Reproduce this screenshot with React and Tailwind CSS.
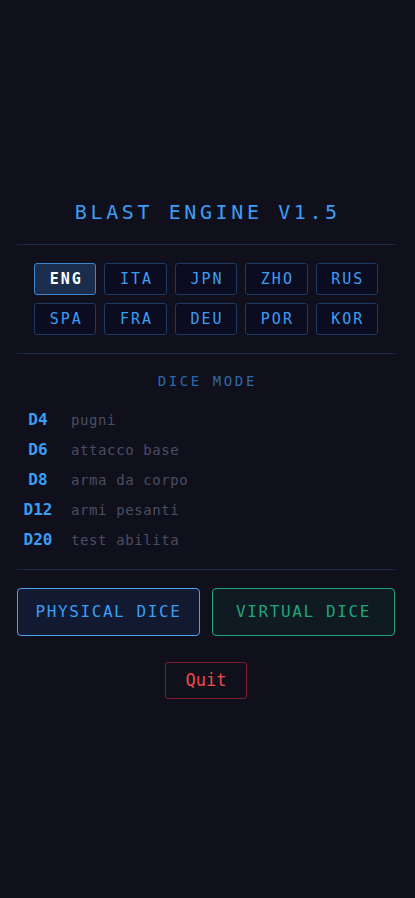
import React, { useState } from 'react';

const LANGS = ['ENG', 'ITA', 'JPN', 'ZHO', 'RUS', 'SPA', 'FRA', 'DEU', 'POR', 'KOR'];

const DICE = [
  { die: 'D4', label: 'pugni' },
  { die: 'D6', label: 'attacco base' },
  { die: 'D8', label: 'arma da corpo' },
  { die: 'D12', label: 'armi pesanti' },
  { die: 'D20', label: 'test abilita' },
];

const App = () => {
  const [lang, setLang] = useState('ENG');

  return (
    <div
      className="min-h-screen bg-[#10101c] flex flex-col pt-[202px] pl-[17px] pr-[20px]"
      style={{ fontFamily: '"DejaVu Sans Mono", "Liberation Mono", monospace' }}
    >
      <h1 className="text-center text-[20px] tracking-[3.6px] pl-[3.6px] text-[#3b9ef5] leading-[20px]">
        BLAST ENGINE V1.5
      </h1>

      <div className="h-px bg-[#1c2a45] mt-[22px]" />

      {/* language picker */}
      <div className="grid grid-cols-5 gap-[8px] px-[17px] py-[18px]">
        {LANGS.map((l) => (
          <button
            key={l}
            onClick={() => setLang(l)}
            className={`h-[32px] rounded-[3px] border text-[15px] tracking-[2px] pl-[2px] ${
              lang === l
                ? 'bg-[#1a2d4c] border-[#3a86cf] text-white font-bold'
                : 'bg-[#0b0c1f] border-[#1d3a64] text-[#3b9ef5]'
            }`}
          >
            {l}
          </button>
        ))}
      </div>

      <div className="h-px bg-[#1c2a45]" />

      <div className="text-center text-[14px] tracking-[2.6px] pl-[2.6px] text-[#2d68a8] mt-[17px]">
        DICE MODE
      </div>

      <div className="flex flex-col mt-[13px] mb-[14px]">
        {DICE.map((d) => (
          <div key={d.die} className="flex items-center h-[30px]">
            <span className="w-[42px] text-center text-[16px] font-bold text-[#3b9ef5]">{d.die}</span>
            <span className="text-[14px] tracking-[0.6px] text-[#4a4e62] ml-[12px]">{d.label}</span>
          </div>
        ))}
      </div>

      <div className="h-px bg-[#1c2a45]" />

      <div className="flex gap-[12px] mt-[18px]">
        <button className="flex-1 h-[48px] rounded-[4px] border border-[#4aa3f0] bg-[#111a31] text-[#3b9ef5] text-[16px] tracking-[1.6px]">
          PHYSICAL DICE
        </button>
        <button className="flex-1 h-[48px] rounded-[4px] border border-[#1fa67a] bg-[#0f1a22] text-[#1fa67a] text-[16px] tracking-[1.6px]">
          VIRTUAL DICE
        </button>
      </div>

      <div className="flex justify-center mt-[26px]">
        <button className="w-[82px] h-[37px] rounded-[3px] border border-[#7a1e2a] bg-transparent text-[#ef4a4a] text-[17px]">
          Quit
        </button>
      </div>
    </div>
  );
};

export default App;
